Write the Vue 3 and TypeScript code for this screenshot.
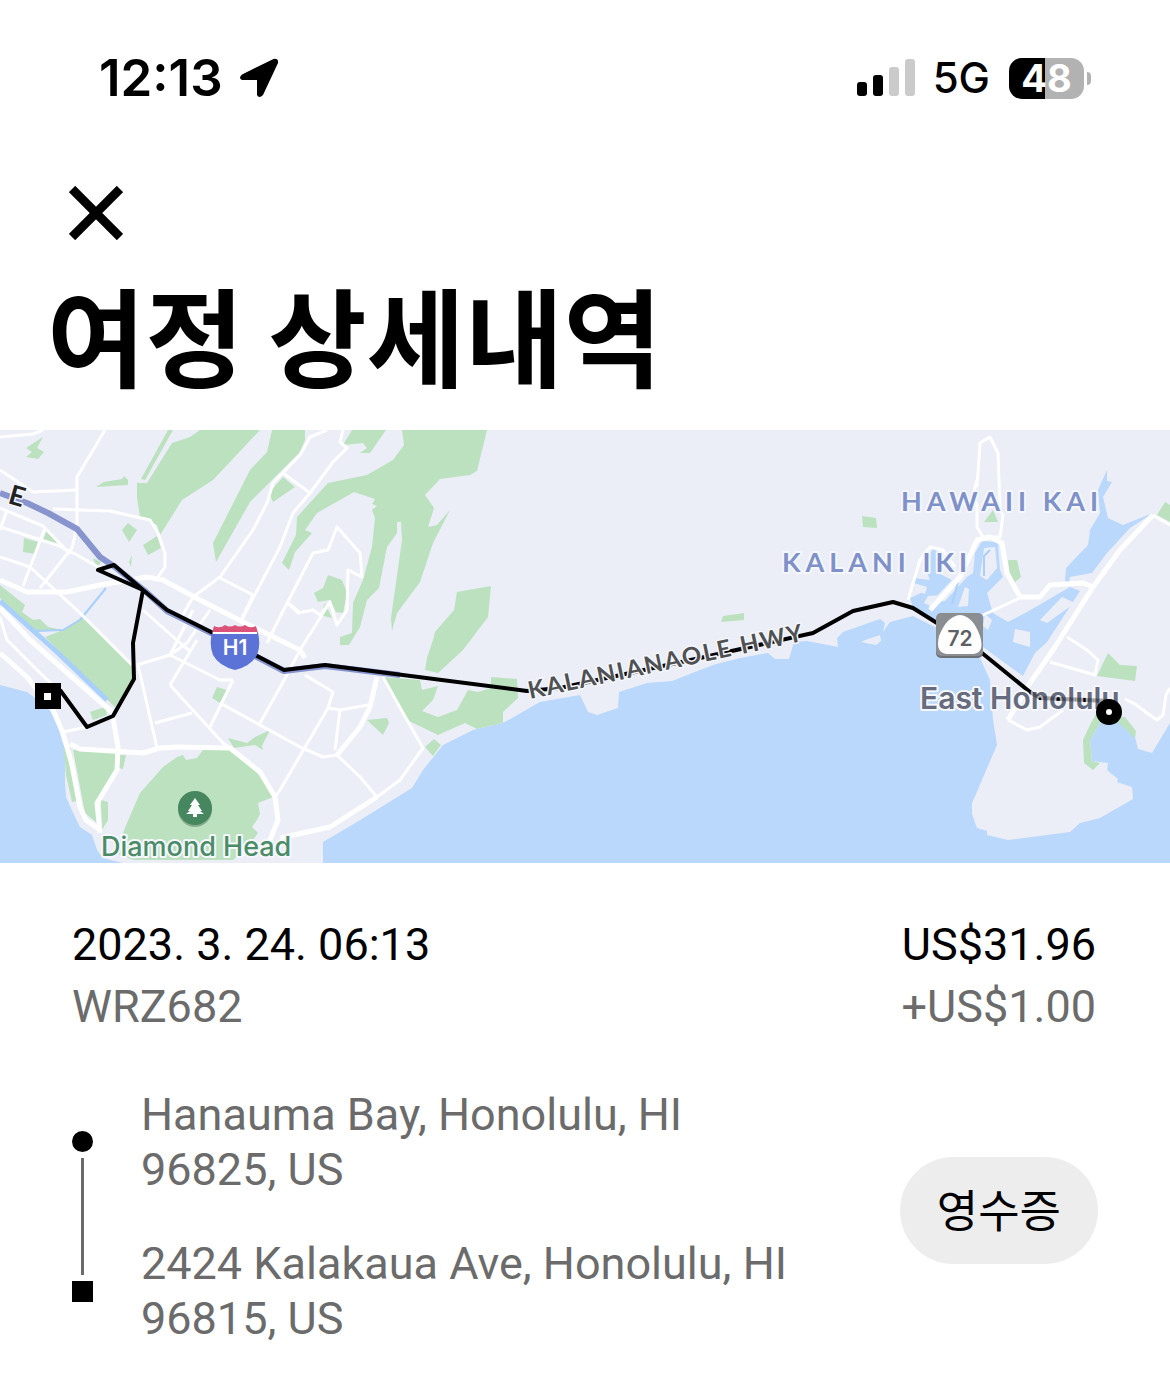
<script setup lang="ts">
interface Stop {
  kind: 'pickup' | 'dropoff'
  lines: string[]
}

const trip = {
  date: '2023. 3. 24. 06:13',
  plate: 'WRZ682',
  fare: 'US$31.96',
  tip: '+US$1.00',
}

const stops: Stop[] = [
  { kind: 'pickup', lines: ['Hanauma Bay, Honolulu, HI', '96825, US'] },
  { kind: 'dropoff', lines: ['2424 Kalakaua Ave, Honolulu, HI', '96815, US'] },
]

const parks: string[] = [
  '168,0 173,0 145,50 141,49',
  '200,0 190,7 172,13 147,53 137,53 137,67 140,87 157,95 160,105 182,70 213,50 260,0',
  '272,0 267,22 250,40 213,113 216,132 250,72 300,22 305,10 305,0',
  '269,63 283,47 295,57 273,72',
  '352,0 343,15 363,13 367,18 360,23 370,23 386,0',
  '402,0 404,15 393,30 367,45 328,53 297,87 296,105 282,133 289,140 295,122 312,103 305,100 317,83 354,62 375,69 372,74 377,76 372,80 375,88 372,117 363,150 353,173 352,203 340,207 340,215 349,215 360,197 367,170 379,158 387,117 397,103 397,92 401,92 402,110 391,188 392,201 397,183 420,152 433,113 450,80 437,95 428,97 434,78 425,65 440,49 470,45 477,41 487,0',
  '328,145 342,150 347,163 343,183 336,182 330,170 318,172 314,163 323,158',
  '325,173 332,188 320,185',
  '457,162 491,156 488,187 463,220 438,243 425,240 427,228 433,210 435,202 454,180',
  '382,247 420,250 422,260 438,256 433,270 422,281 438,287 457,280 468,260 478,262 491,258 491,247 517,249 518,268 503,282 503,293 477,299 465,293 438,305 407,290',
  '367,290 387,288 389,293 383,305',
  '425,317 434,309 441,315 433,326',
  '82,187 115,218 132,235 133,250 115,277 100,263 45,207 63,200',
  '0,155 25,175 22,182 33,190 40,189 48,197 63,200 33,202 0,168',
  '73,320 118,323 115,343 97,373 97,393 85,383',
  '63,310 70,317 78,371 72,372 66,345',
  '101,370 108,372 108,390 102,400',
  '120,325 126,325 123,339 118,338',
  '183,325 186,330 197,328 203,320 230,320 253,338 267,353 273,367 258,373 260,384 257,390 252,397 258,403 248,417 233,430 133,430 115,423 127,393 140,363 163,337 177,327',
  '90,282 105,277 107,285 93,290',
  '217,257 227,260 220,273 212,268',
  '228,308 247,313 255,307 270,300 262,316 263,320 255,315 234,318',
  '26,18 43,7 37,18 44,22 38,29 26,27 32,22',
  '96,57 104,52 122,49 124,46 128,50 128,55',
  '122,100 128,93 137,100 129,112',
  '143,115 157,106 161,118 148,125',
  '24,108 38,112 35,124 23,122',
  '47,100 60,117 43,110',
  '93,128 101,132 97,138',
  '129,132 132,125 131,137',
  '862,86 876,88 877,98 863,97',
  '723,186 744,183 744,190 721,192',
  '993,80 998,92 984,92',
  '1008,130 1017,130 1021,147 1014,153 1010,147',
  '1165,72 1170,75 1170,92 1157,85',
  '1108,223 1120,235 1137,236 1135,251 1097,246',
  '1096,284 1090,295 1083,310 1084,333 1093,340 1100,333 1092,331 1090,310 1100,293 1106,284',
  '1112,288 1125,287 1136,301 1135,308 1120,294',
]

const waters: string[] = [
  '0,255 27,262 35,268 50,280 58,297 65,320 65,353 66,367 75,387 80,397 92,405 97,420 103,428 123,433 0,433',
  '323,433 323,412 357,392 412,358 423,340 443,315 473,300 503,293 540,272 580,265 588,282 597,285 618,278 619,262 647,253 672,251 713,235 740,228 768,223 775,229 789,229 794,212 807,211 838,217 837,208 843,202 880,189 885,193 883,202 890,192 913,186 937,198 980,228 990,250 993,290 997,315 972,373 972,384 977,398 987,401 987,405 1008,410 1070,402 1080,393 1100,388 1133,369 1132,357 1117,352 1118,349 1107,340 1108,333 1092,331 1090,310 1100,293 1120,292 1135,307 1138,319 1152,323 1170,293 1170,433',
  '933,119 940,123 938,143 952,150 930,173 945,171 967,147 973,143 975,123 982,111 998,112 1000,140 1003,147 987,163 993,183 1008,192 1027,182 1070,157 1080,161 1047,212 1035,223 1023,246 983,217 960,202 930,187 913,178 910,168 923,162 913,160 914,148 930,150 923,133',
  '1107,40 1107,51 1112,52 1103,67 1108,88 1123,95 1153,83 1130,98 1107,123 1092,143 1070,147 1068,158 1065,150 1066,138 1088,115 1090,100 1100,83 1098,60',
]

const islands: string[] = [
  '984,118 995,117 997,138 987,150 980,146',
  '965,157 969,159 968,176 958,177',
  '1040,190 1062,167 1075,173 1047,193',
  '1015,199 1030,202 1030,217 1013,212',
  '985,184 992,190 988,200 983,196',
  '914,153 927,157 925,164 913,160',
  '928,166 943,165 932,177 924,173',
  '861,212 868,209 880,205 881,211 876,215',
]

const creeks: string[] = [
  '984,146 984,126 990,120',
  '958,152 952,174',
]

const minorRoads: string[] = [
  '105,0 77,47 77,97 72,118 40,158',
  '0,7 33,4 43,0',
  '0,40 33,62 77,60',
  '0,78 43,96 70,124',
  '53,79 110,81 150,90 158,103 165,123 165,137 158,147',
  '0,97 57,115 77,125 100,138',
  '0,127 30,137 80,183 115,218 132,235',
  '45,98 23,156',
  '7,80 0,100',
  '193,167 220,147 253,100 267,73 273,53 300,25 310,7 327,0',
  '343,0 340,12 347,18 333,32 310,63 293,83 280,117 240,193',
  '283,43 310,63',
  '220,148 253,165',
  '330,172 300,220 287,245 260,293',
  '267,213 280,187 313,123 328,120 337,97 360,123 362,147 348,140 347,180 337,195 330,172 320,185 313,180 298,183 288,173',
  '288,173 300,183',
  '253,165 240,193',
  '0,187 7,210 37,240 60,262',
  '63,302 87,297',
  '138,235 157,318',
  '137,235 170,225 193,180',
  '143,180 180,213 190,221',
  '193,167 180,190 230,215',
  '210,180 187,213 170,225 220,250 233,250',
  '170,255 197,210',
  '170,255 223,313 230,318',
  '155,293 192,283',
  '210,297 233,250',
  '220,273 300,317 323,327 337,325',
  '305,245 333,262 328,278 280,360 275,367',
  '340,280 335,320',
  '328,278 340,280 368,275',
  '337,325 360,347 377,367',
  '383,247 407,290 423,318 400,350 377,367',
  '977,57 980,13 990,7 998,23 1000,80 1003,85 1000,107 983,107 977,97 977,75 973,65 977,50',
  '908,170 920,130 930,117 943,120 955,137',
  '983,185 1020,168',
  '1153,85 1170,95',
  '1067,207 1087,220 1098,230 1095,245 1050,232',
  '1008,290 1027,300 1040,297 1063,280',
  '1125,269 1135,274 1147,283 1157,290 1163,285 1166,265 1170,258',
]

const majorRoads: string[] = [
  '0,150 27,162 67,162 100,155 147,147 163,150 200,170 253,197 300,220 305,228',
  '0,223 27,247 53,280 63,303 72,335 80,377 86,390 100,400',
  '0,178 30,210 112,282 118,317 117,340 97,373 100,403',
  '70,314 80,319 143,323 160,318 177,317 230,318 260,342 275,367 278,390 270,410 240,425',
  '337,325 360,297 370,277 377,247',
  '377,367 330,397 280,408',
  '930,180 960,147 977,110 990,107 1002,113 1007,143 1020,167 1040,167 1050,155 1083,153 1093,157',
  '1153,85 1120,120 1093,157 1053,220 1030,253 1008,290',
]
</script>

<template>
  <main class="screen">
    <header class="status">
      <div class="status-left">
        <time class="clock">12:13</time>
        <svg class="arrow" viewBox="0 0 40 40" aria-hidden="true">
          <path d="M3 16.500 34.500 1Q39.500 0 39 5L24 37Q20 41 18 37V22H3Q-1 20 3 16.500Z" />
        </svg>
      </div>
      <div class="status-right">
        <svg class="signal" viewBox="0 0 58 38" aria-hidden="true">
          <rect x="0" y="23" width="10" height="14" rx="3" />
          <rect x="16" y="16" width="10" height="21" rx="3" />
          <rect x="32" y="8" width="10" height="29" rx="3" class="dim" />
          <rect x="48" y="0" width="10" height="37" rx="3" class="dim" />
        </svg>
        <span class="network">5G</span>
        <span class="battery"><span class="level">48</span><span class="nub"></span></span>
      </div>
    </header>

    <div class="heading">
      <button class="close" type="button" aria-label="닫기">
        <svg viewBox="0 0 54 54" aria-hidden="true">
          <path d="M3 3 51 51M51 3 3 51" />
        </svg>
      </button>
      <h1>여정 상세내역</h1>
    </div>

    <svg class="map" viewBox="0 0 1170 433" role="img" aria-label="Hanauma Bay – Kalakaua Ave">
      <rect class="land" width="1170" height="433" />
      <polygon v-for="p in parks.slice(0, 12)" :key="p" :points="p" class="park" />
      <polygon v-for="p in waters" :key="p" :points="p" class="water" />
      <polygon v-for="p in parks.slice(12)" :key="p" :points="p" class="park" />
      <polygon v-for="p in islands" :key="p" :points="p" class="land" />
      <polyline v-for="p in creeks" :key="p" :points="p" class="creek" />
      <polyline points="0,171 57,222 107,270" class="canal" />
      <polyline points="35,201 63,200 80,190 106,158" class="creek" />
      <polyline v-for="p in minorRoads" :key="p" :points="p" class="road" />
      <polyline v-for="p in majorRoads" :key="p" :points="p" class="road major" />
      <polyline points="0,63 27,73 48,83 77,99 100,127 115,137 145,161 167,181 213,204 257,227 284,241 325,236 400,245" class="freeway" />
      <polyline
        points="60,260 87,297 113,286 134,249 133,213 143,160 98,140 114,135 143,160 167,180 213,203 257,226 284,240 325,235 527,261 560,258 700,228 813,203 853,181 893,172 913,178 937,193 982,223 1030,262 1040,268 1109,271"
        class="route"
      />

      <g class="label">
        <text x="7" y="73" class="street e" transform="rotate(16 7 73)">E</text>
        <text x="901" y="81" class="area">HAWAII KAI</text>
        <text x="782" y="142" class="area">KALANI IKI</text>
        <text x="530" y="269" class="street" transform="rotate(-12 530 269)">KALANIANAOLE HWY</text>
        <text x="920" y="279" class="town">East Honolulu</text>
        <text x="101" y="426" class="poi">Diamond Head</text>
      </g>
      <polyline points="1030,262 1040,268 1109,271" class="route faint" />

      <g>
        <path d="M214 196Q220 199 225 195Q230 198 235 195Q240 198 245 195Q250 199 256 196L258 203H212Z" fill="#db5378" />
        <path d="M212 203H258Q261 215 257 225Q251 236 235 240Q219 236 213 225Q209 215 212 203Z" fill="#5b73d6" />
        <path d="M213 203H257" stroke="#fff" stroke-width="2" />
        <text x="235" y="225" class="shield h1">H1</text>
      </g>
      <g>
        <rect x="936" y="185" width="47" height="43" rx="5" fill="#6c6f73" />
        <rect x="936" y="183" width="47" height="43" rx="5" fill="#8a8d91" />
        <path d="M960 185Q973 186 980 206Q985 223 973 224H947Q935 223 939 206Q947 186 960 185Z" fill="#fff" />
        <text x="960" y="216" class="shield hwy">72</text>
      </g>
      <g>
        <circle cx="195" cy="380" r="17" fill="#3c5f4c" opacity="0.4" />
        <circle cx="195" cy="378" r="17" fill="#46875f" />
        <path d="M195 368 200 375H198L202 381H200L204 384H197V387H193V384H186L190 381H188L192 375H190Z" fill="#fff" />
      </g>
      <rect x="35" y="253" width="26" height="26" />
      <rect x="44" y="263" width="7" height="7" fill="#fff" />
      <circle cx="1109" cy="282" r="13" />
      <circle cx="1109" cy="282" r="3" fill="#fff" />
    </svg>

    <section class="details">
      <div class="summary">
        <span>{{ trip.date }}</span>
        <span>{{ trip.fare }}</span>
      </div>
      <div class="summary muted">
        <span>{{ trip.plate }}</span>
        <span>{{ trip.tip }}</span>
      </div>

      <div class="journey">
        <div class="rail" aria-hidden="true">
          <span class="dot"></span>
          <span class="line"></span>
          <span class="square"></span>
        </div>
        <ol class="stops">
          <li v-for="stop in stops" :key="stop.kind">
            <div v-for="line in stop.lines" :key="line">{{ line }}</div>
          </li>
        </ol>
        <button class="receipt" type="button">영수증</button>
      </div>
    </section>
  </main>
</template>

<style>
body {
  margin: 0;
  background: #fff;
}
</style>

<style scoped>
.screen {
  background: #fff;
  color: #000;
  font-family: Roboto, "Noto Sans CJK KR", sans-serif;
}

.status {
  display: flex;
  justify-content: space-between;
  align-items: center;
  height: 156px;
  padding: 0 79px 0 99px;
  font-family: Inter, "Noto Sans CJK KR", sans-serif;
}

.status-left,
.status-right {
  display: flex;
  align-items: center;
}

.status-left {
  gap: 16px;
}

.clock {
  font-size: 51px;
  font-weight: 600;
  line-height: 60px;
}

.arrow {
  width: 40px;
  height: 40px;
}

.signal {
  width: 58px;
  height: 38px;
}

.dim {
  fill: #cbcbcb;
}

.network {
  margin: 0 19px 0 18px;
  font-size: 42px;
  font-weight: 500;
  line-height: 60px;
}

.battery {
  display: flex;
  align-items: center;
  gap: 3px;
}

.level {
  width: 75px;
  border-radius: 13px;
  background: linear-gradient(to right, #000 36px, #b2b2b2 36px);
  color: #fff;
  font-size: 38px;
  font-weight: 700;
  line-height: 41px;
  text-align: center;
}

.nub {
  width: 4px;
  height: 13px;
  border-radius: 0 6px 6px 0;
  background: #b2b2b2;
}

.heading {
  padding: 30px 47px 34px;
}

.close {
  display: block;
  margin: 0 0 30px 22px;
  padding: 0;
  border: 0;
  background: none;
}

.close svg {
  display: block;
  width: 54px;
  height: 54px;
  stroke: #000;
  stroke-width: 9px;
}

h1 {
  margin: 0;
  font-family: "Noto Sans CJK KR", sans-serif;
  font-size: 107px;
  font-weight: 700;
  line-height: 126px;
}

.map {
  display: block;
  width: 100%;
}

.land {
  fill: #ebeef6;
}

.park {
  fill: #bbe1bf;
}

.water {
  fill: #b9d8fb;
}

.canal,
.creek,
.road,
.freeway,
.route {
  fill: none;
  stroke-linejoin: round;
}

.canal {
  stroke: #a9cffb;
  stroke-width: 5px;
}

.creek {
  stroke: #a9cffb;
  stroke-width: 2px;
}

.road {
  stroke: #fff;
  stroke-width: 3px;
}

.major {
  stroke-width: 5px;
}

.freeway {
  stroke: #8794cd;
  stroke-width: 6px;
}

.route {
  stroke: #000;
  stroke-width: 4px;
}

.faint {
  opacity: 0.3;
}

.label text {
  paint-order: stroke;
  stroke: #f5f7fc;
  stroke-width: 4px;
  stroke-linejoin: round;
  font-family: Lato, sans-serif;
}

.label .area {
  fill: #7f91c9;
  font-size: 27px;
  font-weight: 700;
  letter-spacing: 5px;
}

.label .street {
  fill: #4f5153;
  stroke-width: 3px;
  font-size: 24px;
  font-weight: 700;
  letter-spacing: 2px;
}

.label .e {
  fill: #222;
  font-size: 27px;
}

.label .town {
  fill: #666b7d;
  font-family: Inter, sans-serif;
  font-size: 30px;
  font-weight: 600;
}

.label .poi {
  fill: #4b8c68;
  font-family: Inter, sans-serif;
  font-size: 27px;
  font-weight: 500;
}

.shield {
  font-family: Inter, sans-serif;
  font-weight: 600;
  text-anchor: middle;
}

.h1 {
  fill: #fff;
  font-size: 21px;
}

.hwy {
  fill: #5d6064;
  font-size: 21px;
}

.details {
  padding: 51px 74px 30px 72px;
}

.summary {
  display: flex;
  justify-content: space-between;
  font-size: 45px;
  line-height: 62px;
}

.muted {
  color: #6b6b6b;
}

.journey {
  display: flex;
  align-items: center;
  margin: 49px -2px 0 0;
}

.rail {
  display: flex;
  flex-direction: column;
  align-items: center;
  align-self: stretch;
  gap: 6px;
  width: 21px;
  padding: 44px 0;
}

.dot,
.square {
  width: 21px;
  height: 21px;
  background: #000;
}

.dot {
  border-radius: 50%;
}

.line {
  flex: 1;
  width: 3px;
  background: #6b6b6b;
}

.stops {
  display: flex;
  flex: 1;
  flex-direction: column;
  gap: 39px;
  margin: 0 0 0 48px;
  padding: 0;
  list-style: none;
  color: #6b6b6b;
  font-size: 45px;
  line-height: 55px;
}

.receipt {
  margin: 0 0 12px;
  padding: 0 37px 4px;
  border: 0;
  border-radius: 54px;
  background: #ededed;
  color: #000;
  font-family: "Noto Sans CJK KR", sans-serif;
  font-size: 45px;
  line-height: 103px;
}
</style>
